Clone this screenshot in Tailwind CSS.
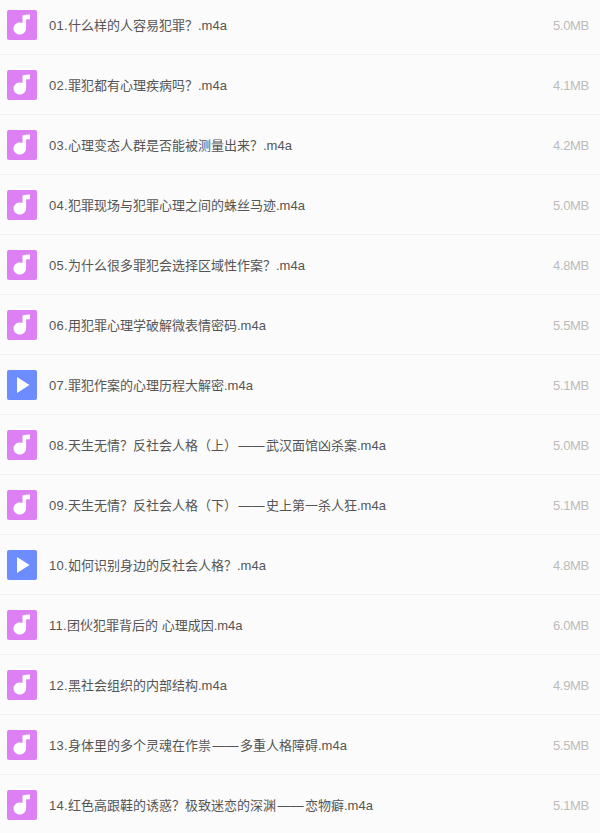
<!DOCTYPE html>
<html lang="zh"><head><meta charset="utf-8">
<script src="https://cdn.jsdelivr.net/npm/@tailwindcss/browser@4"></script>
</head>
<body class="bg-[#fbfbfb] overflow-hidden font-['Liberation_Sans','Noto_Sans_CJK_SC',sans-serif]">
<svg class="hidden"><defs>
<symbol id="n" viewBox="0 0 30 30"><rect width="30" height="30" rx="2" fill="#dc80f3"/><path d="M15.500 5.400c2.300-.7 4.800-1 7.500-1v4.800c-1.400 0-2.700.1-3.900.4v9c0 3.300-2.800 6-6.300 6s-6.300-2.700-6.300-6 2.800-6 6.300-6c.9 0 1.800.2 2.700.5z" fill="#fff"/></symbol>
<symbol id="p" viewBox="0 0 30 30"><rect width="30" height="30" rx="2" fill="#6c8cff"/><path d="M10 7l12.500 8L10 23z" fill="#fff"/></symbol>
</defs></svg>
<ul class="-mt-[5px] text-[13px] leading-[20px]">
<li class="h-[60px] flex items-center pl-[7px] pr-[11px] border-b border-[#f0f0f0]"><svg class="w-[30px] h-[30px] shrink-0"><use href="#n"/></svg><span class="ml-3 pt-[2px] flex-1 text-[#555]"><span class="tracking-[0.3px]">01.</span>什么样的人容易犯罪？.m4a</span><span class="pt-[2px] text-[#bbb] tracking-[-0.3px]">5.0MB</span></li>
<li class="h-[60px] flex items-center pl-[7px] pr-[11px] border-b border-[#f0f0f0]"><svg class="w-[30px] h-[30px] shrink-0"><use href="#n"/></svg><span class="ml-3 pt-[2px] flex-1 text-[#555]"><span class="tracking-[0.3px]">02.</span>罪犯都有心理疾病吗？.m4a</span><span class="pt-[2px] text-[#bbb] tracking-[-0.3px]">4.1MB</span></li>
<li class="h-[60px] flex items-center pl-[7px] pr-[11px] border-b border-[#f0f0f0]"><svg class="w-[30px] h-[30px] shrink-0"><use href="#n"/></svg><span class="ml-3 pt-[2px] flex-1 text-[#555]"><span class="tracking-[0.3px]">03.</span>心理变态人群是否能被测量出来？.m4a</span><span class="pt-[2px] text-[#bbb] tracking-[-0.3px]">4.2MB</span></li>
<li class="h-[60px] flex items-center pl-[7px] pr-[11px] border-b border-[#f0f0f0]"><svg class="w-[30px] h-[30px] shrink-0"><use href="#n"/></svg><span class="ml-3 pt-[2px] flex-1 text-[#555]"><span class="tracking-[0.3px]">04.</span>犯罪现场与犯罪心理之间的蛛丝马迹.m4a</span><span class="pt-[2px] text-[#bbb] tracking-[-0.3px]">5.0MB</span></li>
<li class="h-[60px] flex items-center pl-[7px] pr-[11px] border-b border-[#f0f0f0]"><svg class="w-[30px] h-[30px] shrink-0"><use href="#n"/></svg><span class="ml-3 pt-[2px] flex-1 text-[#555]"><span class="tracking-[0.3px]">05.</span>为什么很多罪犯会选择区域性作案？.m4a</span><span class="pt-[2px] text-[#bbb] tracking-[-0.3px]">4.8MB</span></li>
<li class="h-[60px] flex items-center pl-[7px] pr-[11px] border-b border-[#f0f0f0]"><svg class="w-[30px] h-[30px] shrink-0"><use href="#n"/></svg><span class="ml-3 pt-[2px] flex-1 text-[#555]"><span class="tracking-[0.3px]">06.</span>用犯罪心理学破解微表情密码.m4a</span><span class="pt-[2px] text-[#bbb] tracking-[-0.3px]">5.5MB</span></li>
<li class="h-[60px] flex items-center pl-[7px] pr-[11px] border-b border-[#f0f0f0]"><svg class="w-[30px] h-[30px] shrink-0"><use href="#p"/></svg><span class="ml-3 pt-[2px] flex-1 text-[#555]"><span class="tracking-[0.3px]">07.</span>罪犯作案的心理历程大解密.m4a</span><span class="pt-[2px] text-[#bbb] tracking-[-0.3px]">5.1MB</span></li>
<li class="h-[60px] flex items-center pl-[7px] pr-[11px] border-b border-[#f0f0f0]"><svg class="w-[30px] h-[30px] shrink-0"><use href="#n"/></svg><span class="ml-3 pt-[2px] flex-1 text-[#555]"><span class="tracking-[0.3px]">08.</span>天生无情？反社会人格（上）<span class="px-[1.5px]">——</span>武汉面馆凶杀案.m4a</span><span class="pt-[2px] text-[#bbb] tracking-[-0.3px]">5.0MB</span></li>
<li class="h-[60px] flex items-center pl-[7px] pr-[11px] border-b border-[#f0f0f0]"><svg class="w-[30px] h-[30px] shrink-0"><use href="#n"/></svg><span class="ml-3 pt-[2px] flex-1 text-[#555]"><span class="tracking-[0.3px]">09.</span>天生无情？反社会人格（下）<span class="px-[1.5px]">——</span>史上第一杀人狂.m4a</span><span class="pt-[2px] text-[#bbb] tracking-[-0.3px]">5.1MB</span></li>
<li class="h-[60px] flex items-center pl-[7px] pr-[11px] border-b border-[#f0f0f0]"><svg class="w-[30px] h-[30px] shrink-0"><use href="#p"/></svg><span class="ml-3 pt-[2px] flex-1 text-[#555]"><span class="tracking-[0.3px]">10.</span>如何识别身边的反社会人格？.m4a</span><span class="pt-[2px] text-[#bbb] tracking-[-0.3px]">4.8MB</span></li>
<li class="h-[60px] flex items-center pl-[7px] pr-[11px] border-b border-[#f0f0f0]"><svg class="w-[30px] h-[30px] shrink-0"><use href="#n"/></svg><span class="ml-3 pt-[2px] flex-1 text-[#555]"><span class="tracking-[0.3px]">11.</span>团伙犯罪背后的 心理成因.m4a</span><span class="pt-[2px] text-[#bbb] tracking-[-0.3px]">6.0MB</span></li>
<li class="h-[60px] flex items-center pl-[7px] pr-[11px] border-b border-[#f0f0f0]"><svg class="w-[30px] h-[30px] shrink-0"><use href="#n"/></svg><span class="ml-3 pt-[2px] flex-1 text-[#555]"><span class="tracking-[0.3px]">12.</span>黑社会组织的内部结构.m4a</span><span class="pt-[2px] text-[#bbb] tracking-[-0.3px]">4.9MB</span></li>
<li class="h-[60px] flex items-center pl-[7px] pr-[11px] border-b border-[#f0f0f0]"><svg class="w-[30px] h-[30px] shrink-0"><use href="#n"/></svg><span class="ml-3 pt-[2px] flex-1 text-[#555]"><span class="tracking-[0.3px]">13.</span>身体里的多个灵魂在作祟<span class="px-[1.5px]">——</span>多重人格障碍.m4a</span><span class="pt-[2px] text-[#bbb] tracking-[-0.3px]">5.5MB</span></li>
<li class="h-[60px] flex items-center pl-[7px] pr-[11px] border-b border-[#f0f0f0]"><svg class="w-[30px] h-[30px] shrink-0"><use href="#n"/></svg><span class="ml-3 pt-[2px] flex-1 text-[#555]"><span class="tracking-[0.3px]">14.</span>红色高跟鞋的诱惑？极致迷恋的深渊<span class="px-[1.5px]">——</span>恋物癖.m4a</span><span class="pt-[2px] text-[#bbb] tracking-[-0.3px]">5.1MB</span></li>
</ul>
</body></html>
